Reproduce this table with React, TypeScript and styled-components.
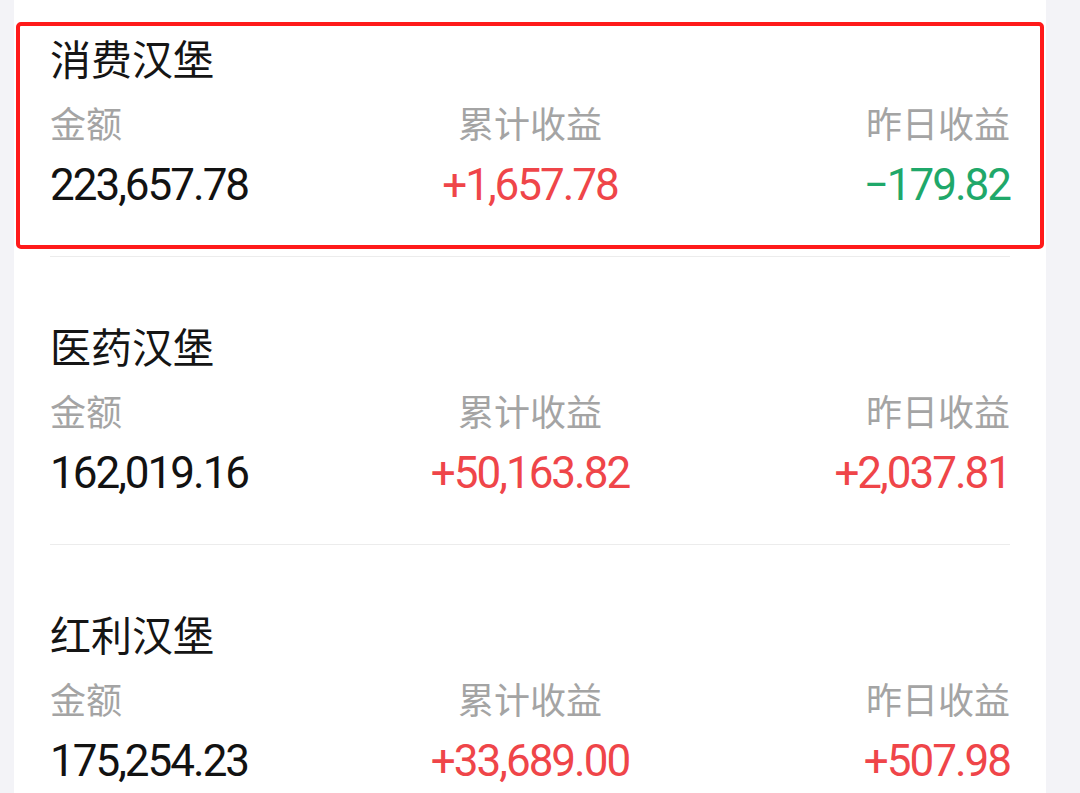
import React from "react";
import styled, { createGlobalStyle } from "styled-components";

const GlobalStyle = createGlobalStyle`
	html, body {
		margin: 0;
		padding: 0;
		background: #f3f3f7;
		overflow: hidden;
	}
	body {
		font-family: "Noto Sans CJK SC", "Noto Sans", sans-serif;
	}
`;

const Page = styled.div`
	width: 1080px;
	height: 793px;
	overflow: hidden;
	display: flex;
	background: #f3f3f7;
`;

const Card = styled.div`
	flex: none;
	width: 1032px;
	margin-left: 14px;
	margin-top: -31px;
	padding: 0 36px;
	box-sizing: border-box;
	background: #ffffff;
`;

const Item = styled.div<{ $marked?: boolean }>`
	position: relative;
	padding: 62px 0 45px;
	border-bottom: 1px solid #ececec;

	&::after {
		content: "";
		display: ${(p) => (p.$marked ? "block" : "none")};
		position: absolute;
		top: 53px;
		bottom: 7px;
		left: -34px;
		right: -34px;
		border: 4px solid #ff1a1a;
		border-radius: 5px;
		pointer-events: none;
	}
`;

const Title = styled.div`
	font-size: 41px;
	line-height: 52px;
	color: #151515;
`;

const Grid = styled.div`
	display: grid;
	grid-template-columns: 1fr 1fr 1fr;
	margin-top: 15px;
`;

const Cell = styled.div<{ $align: "left" | "center" | "right" }>`
	display: flex;
	flex-direction: column;
	align-items: ${(p) => (p.$align === "left" ? "flex-start" : p.$align === "right" ? "flex-end" : "center")};
`;

const Label = styled.div`
	font-size: 36px;
	line-height: 48px;
	color: #a4a4a4;
`;

const Value = styled.div<{ $tone: "plain" | "up" | "down" }>`
	margin-top: 13px;
	font-family: Roboto, "Noto Sans", sans-serif;
	font-size: 44px;
	line-height: 52px;
	letter-spacing: -2px;
	color: ${(p) => (p.$tone === "up" ? "#ef4549" : p.$tone === "down" ? "#1fa86a" : "#121212")};
`;

interface Fund {
	name: string;
	amount: string;
	total: string;
	yesterday: string;
}

const funds: Fund[] = [
	{ name: "消费汉堡", amount: "223,657.78", total: "+1,657.78", yesterday: "−179.82" },
	{ name: "医药汉堡", amount: "162,019.16", total: "+50,163.82", yesterday: "+2,037.81" },
	{ name: "红利汉堡", amount: "175,254.23", total: "+33,689.00", yesterday: "+507.98" },
];

const tone = (v: string) => (v.startsWith("+") ? "up" : "down");

export default function App(): JSX.Element {
	return (
		<>
			<GlobalStyle />
			<Page>
				<Card>
					{funds.map((f, i) => (
						<Item key={f.name} $marked={i === 0}>
							<Title>{f.name}</Title>
							<Grid>
								<Cell $align="left">
									<Label>金额</Label>
									<Value $tone="plain">{f.amount}</Value>
								</Cell>
								<Cell $align="center">
									<Label>累计收益</Label>
									<Value $tone={tone(f.total)}>{f.total}</Value>
								</Cell>
								<Cell $align="right">
									<Label>昨日收益</Label>
									<Value $tone={tone(f.yesterday)}>{f.yesterday}</Value>
								</Cell>
							</Grid>
						</Item>
					))}
				</Card>
			</Page>
		</>
	);
}
